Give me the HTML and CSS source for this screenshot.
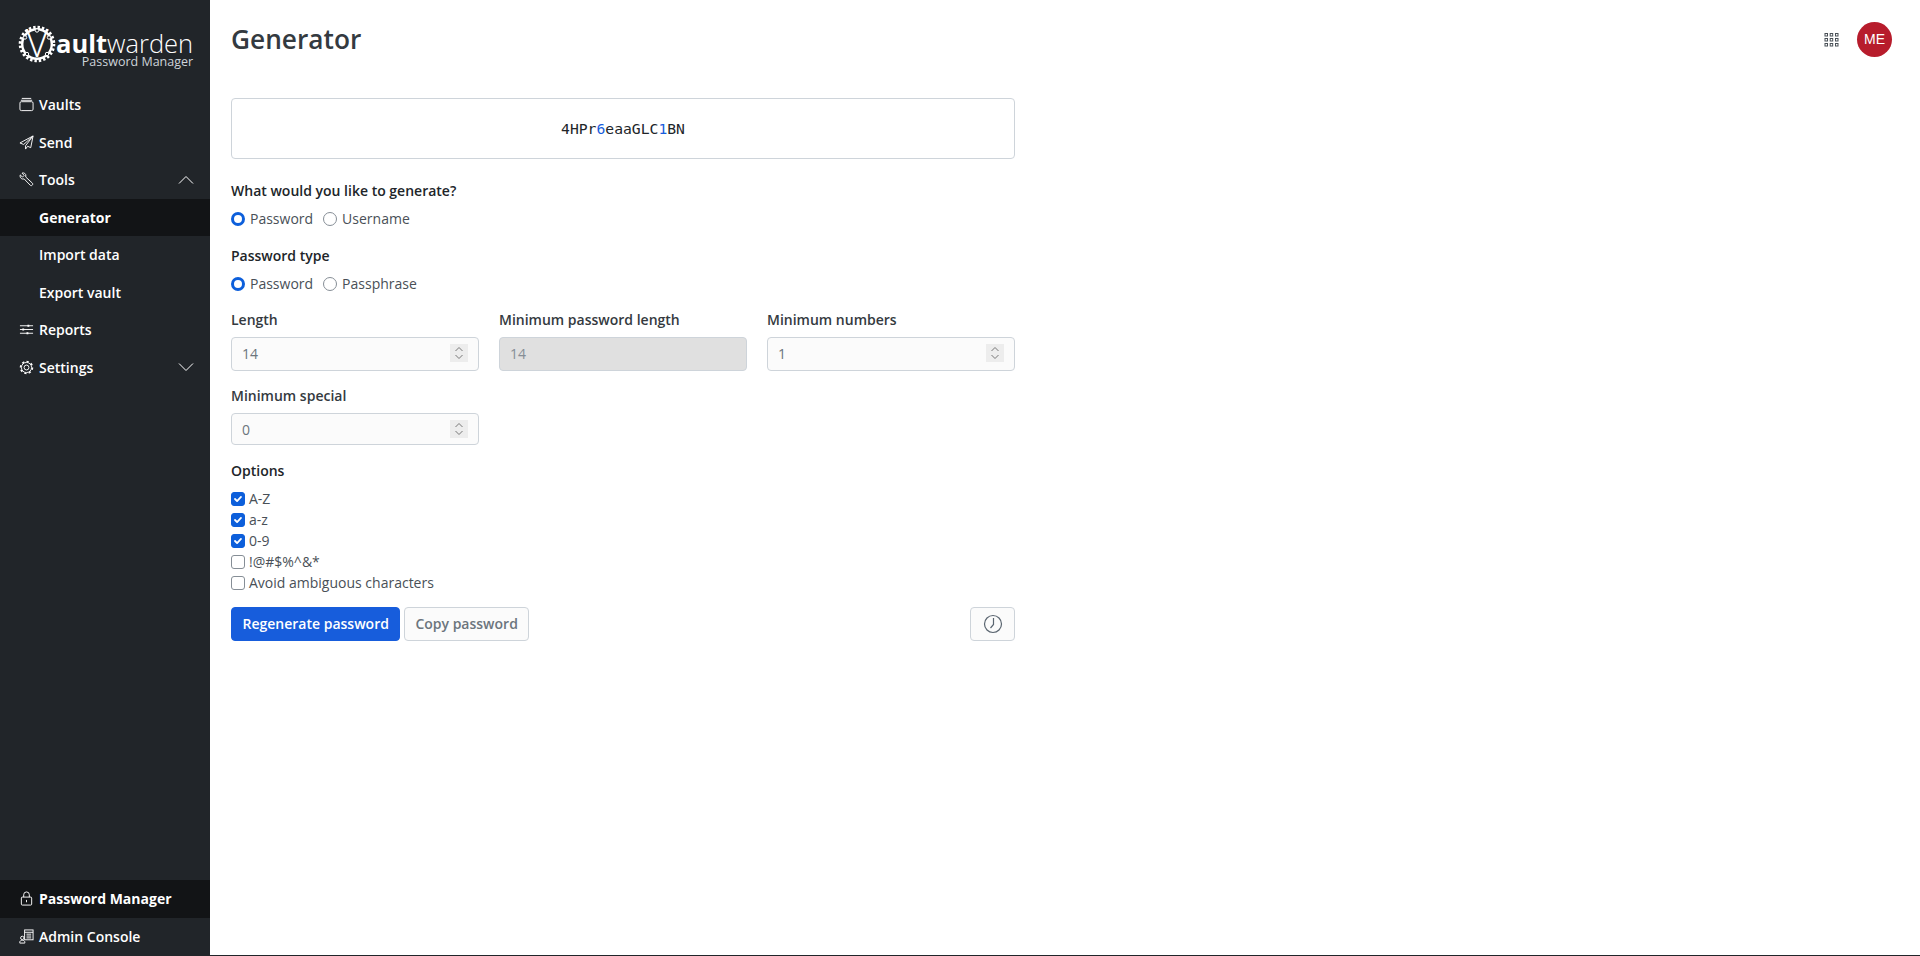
FILE: index.html
```html
<!DOCTYPE html>
<html lang="en">
<head>
<meta charset="utf-8">
<title>Generator</title>
<link rel="stylesheet" href="styles.css">
</head>
<body>
<div class="app">
  <aside class="sidebar">
    <div class="logo">
      <svg class="logo-mark" viewBox="0 0 38 38" width="38" height="38" aria-hidden="true">
        <circle cx="19" cy="19" r="16.8" fill="none" stroke="#fff" stroke-width="3" stroke-dasharray="2.400 2"/>
        <circle cx="19" cy="19" r="14.800" fill="none" stroke="#fff" stroke-width="2.400"/>
        <circle cx="19" cy="5.500" r="1.700" fill="#212529" stroke="#fff" stroke-width="1"/>
        <circle cx="31" cy="12.500" r="1.700" fill="#212529" stroke="#fff" stroke-width="1"/>
        <circle cx="7" cy="12.500" r="1.700" fill="#212529" stroke="#fff" stroke-width="1"/>
        <circle cx="9" cy="29" r="1.700" fill="#212529" stroke="#fff" stroke-width="1"/>
        <circle cx="29" cy="29" r="1.700" fill="#212529" stroke="#fff" stroke-width="1"/>
        <text x="19" y="32" text-anchor="middle" class="logo-v">V</text>
      </svg>
      <div class="logo-text">
        <div class="logo-name"><b>ault</b>warden</div>
        <div class="logo-sub">Password Manager</div>
      </div>
    </div>
    <nav class="nav">
      <a class="nav-row">
        <svg class="ico" viewBox="0 0 16 16"><path d="M3 1.500h10M2 3.500h12"/><rect x="1" y="5" width="14" height="9.500" rx="1.500"/></svg>
        <span>Vaults</span>
      </a>
      <a class="nav-row">
        <svg class="ico" viewBox="0 0 16 16"><path d="M15 1 1 8.500l4 1.600L15 1 7 11.500v3.500l2.200-3L12.500 13.500z"/></svg>
        <span>Send</span>
      </a>
      <a class="nav-row">
        <svg class="ico" viewBox="0 0 16 16"><path d="M1.300 3.100 3.700 5.400 5.500 3.600 3.200 1.200C5.200.4 7.600 1.700 7.300 4.300 7.300 4.700 7.200 5 7.100 5.300L14.200 11.800C15.500 13.200 13.500 15.500 12 14.100L5.400 7.300C3.200 8.200.5 6.300 1.300 3.100Z"/></svg>
        <span>Tools</span>
        <svg class="chev" viewBox="0 0 16 10"><path d="M1 8.500 8 1.500l7 7"/></svg>
      </a>
      <a class="nav-row active sub"><span>Generator</span></a>
      <a class="nav-row sub"><span>Import data</span></a>
      <a class="nav-row sub"><span>Export vault</span></a>
      <a class="nav-row">
        <svg class="ico" viewBox="0 0 16 16"><path d="M1 4h14M1 8h14M1 12h14"/><path class="thick" d="M9 4h2M3.500 8h2M8 12h2"/></svg>
        <span>Reports</span>
      </a>
      <a class="nav-row">
        <svg class="ico" viewBox="0 0 16 16"><circle cx="8" cy="8" r="5.400"/><circle class="teeth" cx="8" cy="8" r="6.400" pathLength="32"/><circle cx="8" cy="8" r="2.600"/></svg>
        <span>Settings</span>
        <svg class="chev" viewBox="0 0 16 10"><path d="M1 1.500l7 7 7-7"/></svg>
      </a>
    </nav>
    <nav class="nav-bottom">
      <a class="nav-row active">
        <svg class="ico" viewBox="0 0 16 16"><rect x="2.500" y="6.500" width="11" height="8.500" rx="1"/><path d="M5 6.500V4a3 3 0 0 1 6 0v2.500M8 9.500v2.500"/></svg>
        <span>Password Manager</span>
      </a>
      <a class="nav-row">
        <svg class="ico" viewBox="0 0 16 16"><rect x="6" y="1" width="9" height="10.500"/><path d="M6 3.500h9M8 5.500h5M8 7.500h5M8 9.500h5"/><circle cx="3.500" cy="9.500" r="1.800"/><path d="M.8 15v-.8c0-1.400 1.200-2.200 2.700-2.200s2.700.8 2.700 2.200v.8z"/></svg>
        <span>Admin Console</span>
      </a>
    </nav>
  </aside>
  <main class="main">
    <header class="page-header">
      <h1>Generator</h1>
      <div class="header-actions">
        <svg class="apps" viewBox="0 0 15 15" width="15" height="15"><g fill="none" stroke="#495057" stroke-width="1"><rect x="1" y="1.500" width="2.500" height="2.500"/><rect x="6.200" y="1.500" width="2.500" height="2.500"/><rect x="11.500" y="1.500" width="2.500" height="2.500"/><rect x="1" y="6.500" width="2.500" height="2.500"/><rect x="6.200" y="6.500" width="2.500" height="2.500"/><rect x="11.500" y="6.500" width="2.500" height="2.500"/><rect x="1" y="11.500" width="2.500" height="2.500"/><rect x="6.200" y="11.500" width="2.500" height="2.500"/><rect x="11.500" y="11.500" width="2.500" height="2.500"/></g></svg>
        <div class="avatar">ME</div>
      </div>
    </header>
    <section class="content">
      <div class="password-box"><span>4HPr<i>6</i>eaaGLC<i>1</i>BN</span></div>

      <div class="group">
        <div class="label">What would you like to generate?</div>
        <div class="radios">
          <label class="radio"><input type="radio" name="what" checked>Password</label>
          <label class="radio"><input type="radio" name="what">Username</label>
        </div>
      </div>

      <div class="group group-tight">
        <div class="label">Password type</div>
        <div class="radios">
          <label class="radio"><input type="radio" name="ptype" checked>Password</label>
          <label class="radio"><input type="radio" name="ptype">Passphrase</label>
        </div>
      </div>

      <div class="fields">
        <label class="field">Length<input type="number" value="14"></label>
        <label class="field">Minimum password length<input type="number" value="14" disabled></label>
        <label class="field">Minimum numbers<input type="number" value="1"></label>
        <label class="field field-short">Minimum special<input type="number" value="0"></label>
      </div>

      <div class="options">
        <div class="label">Options</div>
        <label class="check"><input type="checkbox" checked>A-Z</label>
        <label class="check"><input type="checkbox" checked>a-z</label>
        <label class="check"><input type="checkbox" checked>0-9</label>
        <label class="check"><input type="checkbox">!@#$%^&amp;*</label>
        <label class="check"><input type="checkbox">Avoid ambiguous characters</label>
      </div>

      <div class="actions">
        <button class="btn primary">Regenerate password</button>
        <button class="btn outline">Copy password</button>
        <button class="btn outline history" aria-label="History">
          <svg viewBox="0 0 20 20" width="20" height="20"><circle cx="10" cy="10" r="8.500"/><path d="M10.500 4v6.500L7.500 14"/></svg>
        </button>
      </div>
    </section>
  </main>
</div>
</body>
</html>
```

FILE: styles.css
```css
* { box-sizing: border-box; }
html, body { margin: 0; height: 100%; }
body {
  background: #212529;
  font-family: "Open Sans", sans-serif;
  font-size: 14px;
  color: #212529;
  overflow: hidden;
}
.app { display: flex; height: 955px; background: #fff; }

.sidebar {
  width: 210px;
  flex: none;
  background: #212529;
  display: flex;
  flex-direction: column;
  color: #fff;
}
.logo { display: flex; align-items: flex-start; padding: 25px 0 0 18px; height: 85px; }
.logo-mark { flex: none; overflow: visible; }
.logo-v { font-family: "Open Sans", sans-serif; font-size: 39px; font-weight: 300; fill: #fff; }
.logo-name { font-size: 25.500px; line-height: 26px; font-weight: 300; color: #fff; margin-top: 5px; white-space: nowrap; }
.logo-name b { font-weight: 700; }
.logo-sub { font-size: 12.500px; line-height: 12px; text-align: right; color: #ced4da; white-space: nowrap; }

.nav { flex: 1; padding-top: 1px; }
.nav-bottom { flex: none; }
.nav-row {
  display: flex;
  align-items: center;
  height: 37.500px;
  padding: 0 16px 0 19px;
  font-size: 14px;
  font-weight: 600;
  color: #fff;
}
.nav-row.sub { padding-left: 39px; }
.nav-row.active { background: #121416; font-weight: 700; }
.ico { width: 15px; height: 15px; margin-right: 5px; flex: none; fill: none; stroke: #fff; stroke-width: 1; }
.ico .thick { stroke-width: 2; stroke: #fff; }
.ico .teeth { stroke-width: 1.600; stroke-dasharray: 2 2; }
.chev { width: 16px; height: 10px; margin-left: auto; fill: none; stroke: #fff; stroke-width: 1; }

.main { flex: 1; min-width: 0; padding: 0 28px 0 21px; }
.page-header { display: flex; align-items: center; justify-content: space-between; height: 78px; }
.page-header h1 { margin: 0; font-size: 26.250px; font-weight: 600; line-height: 78px; color: #343a40; }
.header-actions { display: flex; align-items: center; gap: 18px; }
.avatar {
  width: 35px; height: 35px; border-radius: 50%;
  background: #b71c2c; color: #fff;
  font-family: "Liberation Sans", sans-serif; font-size: 14px;
  display: flex; align-items: center; justify-content: center;
}

.content { width: 784px; padding-top: 20px; }
.password-box {
  height: 61px;
  margin-bottom: 21px;
  border: 1px solid #ced4da;
  border-radius: 4px;
  display: flex; align-items: center; justify-content: center;
  font-family: "DejaVu Sans Mono", monospace;
  font-size: 14.700px;
  color: #212529;
}
.password-box i { font-style: normal; color: #175ddc; }

.group { margin-bottom: 16px; }
.group-tight { margin-bottom: 15px; }
.label { font-size: 14px; font-weight: 600; line-height: 21px; color: #212529; }
.radios { display: flex; gap: 10px; margin-top: 7px; line-height: 21px; }
.radio { display: flex; align-items: center; color: #495057; }
.radio input {
  appearance: none; margin: 0 5px 0 0; width: 14px; height: 14px;
  border: 1px solid #868e96; border-radius: 50%; background: #fff;
}
.radio input:checked { border: 3.500px solid #0d5fdb; }

.fields { display: grid; grid-template-columns: repeat(3, 1fr); gap: 14.500px 20px; }
.field { display: block; font-weight: 600; line-height: 21px; color: #343a40; }
.field input {
  display: block; width: 100%; height: 33.500px; margin-top: 7px;
  border: 1px solid #ced4da; border-radius: 4px; background: #fbfbfb;
  padding: 0 10px; font-family: "Open Sans", sans-serif; font-size: 14px; color: #6c757d;
}
.field-short input { height: 32px; }
.field input:disabled { background: #e0e0e0; color: #868e96; }
.field input::-webkit-inner-spin-button {
  -webkit-appearance: none;
  appearance: none;
  display: block;
  opacity: 1;
  width: 18px;
  height: 18px;
  margin-right: 0;
  background: #ededed center / 10px 14px no-repeat url("data:image/svg+xml,%3Csvg xmlns='http://www.w3.org/2000/svg' viewBox='0 0 10 14'%3E%3Cpath fill='none' stroke='%23777' stroke-width='1' d='M1.500 5 5 1.500 8.500 5M1.500 9 5 12.500 8.500 9'/%3E%3C/svg%3E");
}
.field input:disabled::-webkit-inner-spin-button { opacity: 0; }

.options { margin-top: 15px; }
.options .label { margin-bottom: 7px; }
.check { display: flex; align-items: center; height: 21px; line-height: 21px; color: #495057; }
.check input {
  appearance: none; margin: 0 4px 0 0; width: 14px; height: 14px;
  border: 1px solid #868e96; border-radius: 3px; background: #fff;
}
.check input:checked {
  background: #0d5fdb center / 12px 12px no-repeat url("data:image/svg+xml,%3Csvg xmlns='http://www.w3.org/2000/svg' viewBox='0 0 20 20'%3E%3Cpath fill='none' stroke='%23fff' stroke-width='3' stroke-linecap='round' stroke-linejoin='round' d='M5 10l3.500 3.500L15 6.500'/%3E%3C/svg%3E");
  border-color: #0d5fdb;
}

.actions { display: flex; gap: 4px; margin-top: 13.500px; }
.btn {
  height: 34px; border-radius: 4px; padding: 0 10.500px;
  font-family: "Open Sans", sans-serif; font-size: 14px; font-weight: 600;
  border: 1px solid #ced4da;
}
.btn.primary { background: #175ddc; border-color: #175ddc; color: #fff; }
.btn.outline { background: #fbfbfb; color: #6c757d; padding: 0 10px; }
.btn.history { margin-left: auto; width: 45px; padding: 0; display: flex; align-items: center; justify-content: center; }
.history svg { fill: none; stroke: #5a6570; stroke-width: 1.200; }
```
